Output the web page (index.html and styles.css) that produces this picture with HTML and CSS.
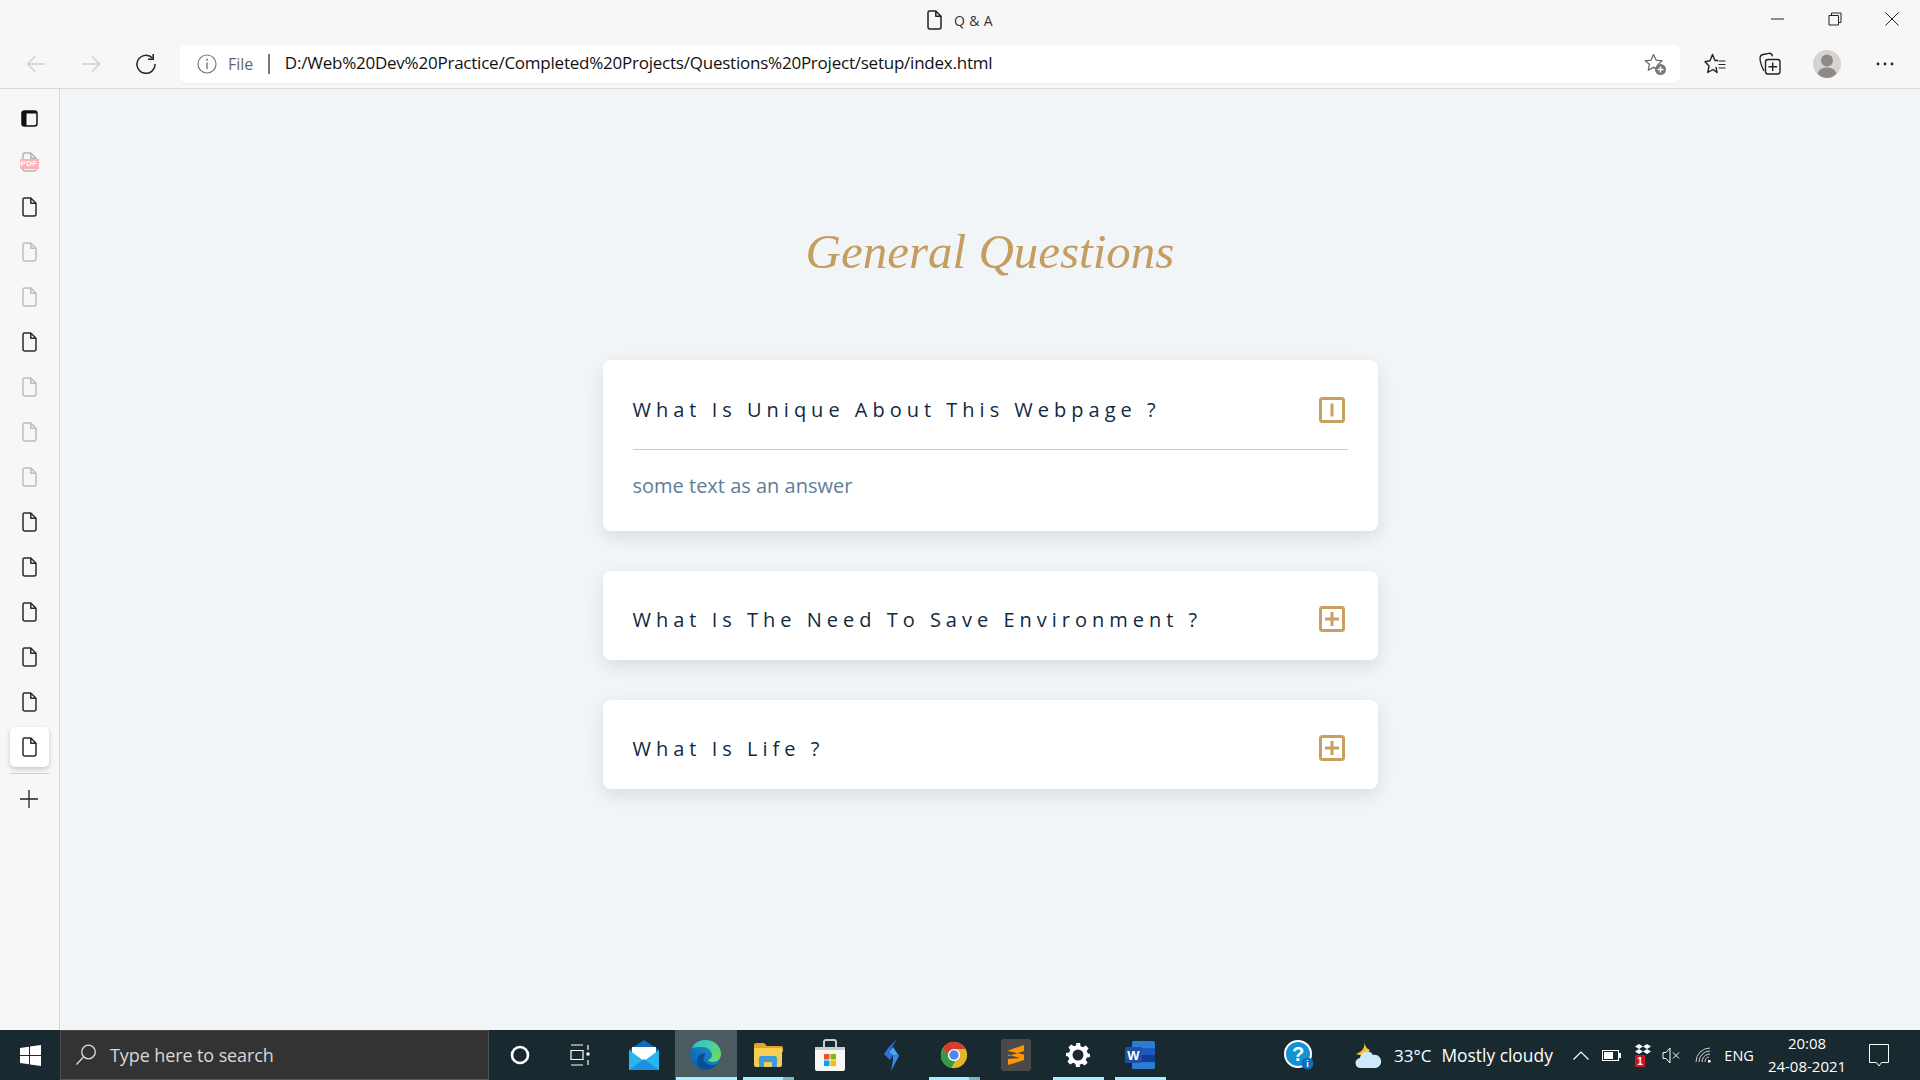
FILE: index.html
```html
<!DOCTYPE html>
<html lang="en">
<head>
<meta charset="utf-8">
<title>Q &amp; A</title>
<link rel="stylesheet" href="styles.css">
</head>
<body>
<svg class="defs" width="0" height="0" aria-hidden="true">
  <symbol id="doc" viewBox="0 0 15 20">
    <path d="M2.5 1h6.3L14 6.2V17a2 2 0 0 1-2 2H3a2 2 0 0 1-2-2V2.5A1.5 1.5 0 0 1 2.5 1zM8.8 1v5.2H14" fill="none" stroke="currentColor" stroke-width="1.5" stroke-linejoin="round"/>
  </symbol>
</svg>
<header class="browser">
  <div class="titlebar">
    <div class="tab-title">
      <svg class="title-doc"><use href="#doc"/></svg>
      <span>Q &amp; A</span>
    </div>
    <div class="window-controls">
      <span class="win-btn"><svg width="14" height="14" viewBox="0 0 14 14"><path d="M0 7h13" stroke="#222" stroke-width="1"/></svg></span>
      <span class="win-btn"><svg width="14" height="14" viewBox="0 0 14 14"><path d="M1 3.5h9.5V13H1zM3.5 3.5V1H13v9.5h-2.5" fill="none" stroke="#222" stroke-width="1"/></svg></span>
      <span class="win-btn"><svg width="14" height="14" viewBox="0 0 14 14"><path d="M.5.5l13 13M13.5.5l-13 13" stroke="#222" stroke-width="1"/></svg></span>
    </div>
  </div>
  <div class="toolbar">
    <span class="nav-btn"><svg width="20" height="18" viewBox="0 0 20 18"><path d="M19 9H1.5M9 1.5L1.5 9 9 16.5" fill="none" stroke="#cfcfcf" stroke-width="1.4"/></svg></span>
    <span class="nav-btn"><svg width="20" height="18" viewBox="0 0 20 18"><path d="M1 9h17.5M11 1.5L18.5 9 11 16.5" fill="none" stroke="#cfcfcf" stroke-width="1.4"/></svg></span>
    <span class="nav-btn"><svg width="22" height="22" viewBox="0 0 22 22"><path d="M17.6 5.2A9 9 0 1 0 20 11" fill="none" stroke="#222" stroke-width="1.5"/><path d="M18.2 1v5.2H13" fill="none" stroke="#222" stroke-width="1.5"/></svg></span>
    <div class="address">
      <svg class="info" width="20" height="20" viewBox="0 0 20 20"><circle cx="10" cy="10" r="9" fill="none" stroke="#777" stroke-width="1.2"/><path d="M10 8.5V15" stroke="#777" stroke-width="1.4"/><circle cx="10" cy="5.8" r="1" fill="#777"/></svg>
      <span class="file">File</span>
      <span class="addr-sep"></span>
      <span class="url">D:/Web%20Dev%20Practice/Completed%20Projects/Questions%20Project/setup/index.html</span>
      <svg class="addr-star" width="24" height="24" viewBox="0 0 24 24"><path d="M10.5 2.5l2.6 5.6 6 .7-4.400 4.100 1 5.300-5.200-2.800-5.200 2.800 1.100-6-4.300-3.400 6-.7z" fill="none" stroke="#666" stroke-width="1.200" stroke-linejoin="round"/><circle cx="17.500" cy="17.500" r="5.500" fill="#777"/><path d="M17.500 14.500v6M14.500 17.500h6" stroke="#fff" stroke-width="1.500"/></svg>
    </div>
    <div class="tools">
      <span class="tool"><svg width="22" height="22" viewBox="0 0 22 22"><path d="M14 7.500h-3L8.500 1.500 6 7.700l-5 1 4 4.300-1.200 6.500L9 16.500l4 3-1-5.500" fill="none" stroke="#222" stroke-width="1.400" stroke-linejoin="round"/><path d="M14.500 8h7M14.500 11.500h7M14.500 15h7" stroke="#222" stroke-width="1.200"/></svg></span>
      <span class="tool tool-collections"><svg width="22" height="24" viewBox="0 0 22 24"><path d="M5 19C3 15 1 10 1 6c0-2 1-3 3-3.500l6-1.200c2-.3 3 .5 3.500 3" fill="none" stroke="#222" stroke-width="1.300"/><rect x="6.500" y="7.500" width="14.500" height="14.500" rx="2.500" fill="none" stroke="#222" stroke-width="1.400"/><path d="M13.700 10.500v8.500M9.500 14.700H18" stroke="#222" stroke-width="1.400"/></svg></span>
      <span class="tool tool-avatar"><svg width="28" height="28" viewBox="0 0 28 28"><circle cx="14" cy="14" r="14" fill="#d6d4d0"/><circle cx="14" cy="10.500" r="6" fill="#8f8a85"/><path d="M4.500 23.500C6 19 10 17.500 14 17.500s8 1.500 9.500 6C21 26.500 17.500 28 14 28s-7-1.500-9.500-4.500z" fill="#8f8a85"/></svg></span>
      <span class="tool"><svg width="18" height="4" viewBox="0 0 18 4"><circle cx="2" cy="2" r="1.400" fill="#222"/><circle cx="9" cy="2" r="1.400" fill="#222"/><circle cx="16" cy="2" r="1.400" fill="#222"/></svg></span>
    </div>
  </div>
</header>

<div class="workspace">
  <aside class="sidebar">
    <span class="side-item side-first"><svg width="17" height="17" viewBox="0 0 17 17"><rect x="1" y="1" width="15" height="15" rx="2.500" fill="none" stroke="#111" stroke-width="1.500"/><path d="M1 2.500A1.500 1.500 0 0 1 2.500 1h13a.5.5 0 0 1 .5.5v2H5.500V16h-3A1.500 1.500 0 0 1 1 14.500z" fill="#111"/></svg></span>
    <span class="side-item pdf-item">
      <svg class="pdf-doc"><use href="#doc"/></svg>
      <span class="pdf-tag">PDF</span>
    </span>
    <span class="side-item"><svg class="doc"><use href="#doc"/></svg></span>
    <span class="side-item dim"><svg class="doc"><use href="#doc"/></svg></span>
    <span class="side-item dim"><svg class="doc"><use href="#doc"/></svg></span>
    <span class="side-item"><svg class="doc"><use href="#doc"/></svg></span>
    <span class="side-item dim"><svg class="doc"><use href="#doc"/></svg></span>
    <span class="side-item dim"><svg class="doc"><use href="#doc"/></svg></span>
    <span class="side-item dim"><svg class="doc"><use href="#doc"/></svg></span>
    <span class="side-item"><svg class="doc"><use href="#doc"/></svg></span>
    <span class="side-item"><svg class="doc"><use href="#doc"/></svg></span>
    <span class="side-item"><svg class="doc"><use href="#doc"/></svg></span>
    <span class="side-item"><svg class="doc"><use href="#doc"/></svg></span>
    <span class="side-item"><svg class="doc"><use href="#doc"/></svg></span>
    <span class="side-item active"><svg class="doc"><use href="#doc"/></svg></span>
    <span class="side-rule"></span>
    <span class="side-item plus"><svg width="18" height="18" viewBox="0 0 18 18"><path d="M9 0v18M0 9h18" stroke="#222" stroke-width="1.300"/></svg></span>
  </aside>

  <main class="page">
    <h1 class="heading">General Questions</h1>
    <section class="questions">
      <article class="card">
        <div class="card-head">
          <h2 class="q-title">What Is Unique About This Webpage ?</h2>
          <svg class="toggle" viewBox="0 0 26 26"><rect x="1.500" y="1.500" width="23" height="23" rx="2" fill="none" stroke="#c9a05f" stroke-width="3"/><path d="M13 6.500v13" stroke="#c9a05f" stroke-width="3"/></svg>
        </div>
        <div class="card-rule"></div>
        <p class="answer">some text as an answer</p>
      </article>
      <article class="card">
        <div class="card-head card-head-closed">
          <h2 class="q-title">What Is The Need To Save Environment ?</h2>
          <svg class="toggle" viewBox="0 0 26 26"><rect x="1.500" y="1.500" width="23" height="23" rx="2" fill="none" stroke="#c9a05f" stroke-width="3"/><path d="M13 6v14M6 13h14" stroke="#c9a05f" stroke-width="3"/></svg>
        </div>
      </article>
      <article class="card">
        <div class="card-head card-head-closed">
          <h2 class="q-title">What Is Life ?</h2>
          <svg class="toggle" viewBox="0 0 26 26"><rect x="1.500" y="1.500" width="23" height="23" rx="2" fill="none" stroke="#c9a05f" stroke-width="3"/><path d="M13 6v14M6 13h14" stroke="#c9a05f" stroke-width="3"/></svg>
        </div>
      </article>
    </section>
  </main>
</div>

<footer class="taskbar">
  <span class="start"><svg width="21" height="21" viewBox="0 0 21 21"><path d="M0 3l9-1.300V10H0zM10 1.500L21 0v10H10zM0 11h9v8.300L0 18zM10 11h11v10l-11-1.500z" fill="#fff"/></svg></span>
  <div class="search">
    <svg width="22" height="22" viewBox="0 0 22 22"><circle cx="13.500" cy="8" r="6.800" fill="none" stroke="#ddd" stroke-width="1.300"/><path d="M8.500 13L1.500 20.500" stroke="#ddd" stroke-width="1.300"/></svg>
    <span>Type here to search</span>
  </div>
  <div class="task-cells">
    <span class="cell"><svg width="20" height="20" viewBox="0 0 20 20"><circle cx="10" cy="10" r="8" fill="none" stroke="#fff" stroke-width="2.600"/></svg></span>
    <span class="cell"><svg class="taskview" width="21" height="22" viewBox="0 0 21 22"><path d="M1 1h12M1 21h12M1 6.500h12v9H1zM18 1v5M18 16v5" fill="none" stroke="#fff" stroke-width="1.200"/><rect x="16.500" y="8.500" width="3" height="3" fill="#fff"/></svg></span>
    <span class="cell"><svg width="32" height="32" viewBox="0 0 32 32"><path d="M1 11L16 1l15 10v20H1z" fill="#0f6cbd"/><path d="M4 8h24v13L16 25 4 21z" fill="#fff"/><path d="M1 11l15 11 15-11v20H1z" fill="#2bb5f0"/><path d="M1 31l15-11 15 11z" fill="#1d8fe0"/></svg></span>
    <span class="cell on"><svg width="32" height="32" viewBox="0 0 32 32"><defs><linearGradient id="edgeA" x1="0" y1="1" x2="1" y2="0"><stop offset="0" stop-color="#0c59a4"/><stop offset="1" stop-color="#1b9de2"/></linearGradient><linearGradient id="edgeB" x1="0" y1="0" x2="1" y2="1"><stop offset="0" stop-color="#33bfd8"/><stop offset="1" stop-color="#6ee05a"/></linearGradient></defs><circle cx="15" cy="16" r="15" fill="url(#edgeA)"/><path d="M2 9C5 3 10 1 16 1c8 0 15 6 15 14 0 5-4 8-8 8-3 0-5-1-5-2 3-1 4-3 4-5 0-4-4-8-9-8-5 0-9 0-11 1z" fill="url(#edgeB)"/><path d="M12 30c-5-2-6-8-4-12 2-3 6-5 8-3-3 2-3 6-1 8 2 3 7 4 12 2-3 4-9 7-15 5z" fill="#0a4f94"/></svg></span>
    <span class="cell"><svg width="30" height="26" viewBox="0 0 30 26"><path d="M1 3a2 2 0 0 1 2-2h8l3 3h14a2 2 0 0 1 2 2v4H1z" fill="#e0a526"/><rect x="1" y="6" width="28" height="19" rx="2" fill="#f6ce55"/><path d="M6 25v-9a2 2 0 0 1 2-2h14a2 2 0 0 1 2 2v9h-5v-5h-8v5z" fill="#3f9ad8"/></svg></span>
    <span class="cell"><svg width="30" height="32" viewBox="0 0 30 32"><path d="M9 8V3a2 2 0 0 1 2-2h8a2 2 0 0 1 2 2v5" fill="none" stroke="#ccc" stroke-width="2"/><path d="M0 8h30v22a2 2 0 0 1-2 2H2a2 2 0 0 1-2-2z" fill="#f7f7f7"/><path d="M0 8h30v3H0z" fill="#ccc"/><rect x="9" y="15" width="5.500" height="5.500" fill="#f25022"/><rect x="15.500" y="15" width="5.500" height="5.500" fill="#7fba00"/><rect x="9" y="21.500" width="5.500" height="5.500" fill="#00a4ef"/><rect x="15.500" y="21.500" width="5.500" height="5.500" fill="#ffb900"/></svg></span>
    <span class="cell"><svg width="16" height="32" viewBox="0 0 16 32"><path d="M13 0L5 8 0 15l6 6 3-5-4-3z" fill="#2f6fe0"/><path d="M5 13l4 3 6 1-6-9z" fill="#49a8f0"/><path d="M9 16l6 1-8 15 2-11z" fill="#3b86e8"/></svg></span>
    <span class="cell"><svg width="28" height="30" viewBox="0 0 32 32"><circle cx="16" cy="16" r="15" fill="#e3b72c"/><path d="M16 1a15 15 0 0 0-12.500 6.700L9.500 19 16 9h13A15 15 0 0 0 16 1z" fill="#d93c2f"/><path d="M3.500 7.700A15 15 0 0 0 13 30.700L18 22 10 20z" fill="#2f9b48"/><circle cx="16" cy="16" r="7" fill="#fff"/><circle cx="16" cy="16" r="5.400" fill="#4d87ee"/></svg></span>
    <span class="cell"><svg width="30" height="32" viewBox="0 0 30 32"><rect width="30" height="32" rx="3" fill="#4a4a4a"/><path d="M23 6v6L7 17v-5.500zM7 20v6l16-5v-5.500L7 12v3.500L19 19z" fill="#ff9800"/></svg></span>
    <span class="cell"><svg width="24" height="24" viewBox="0 0 24 24"><path d="M10 0h4l.6 3.200 2.400 1 2.700-1.800 2.900 2.900L20.800 8l1 2.400L24 11v3l-3.200.6-1 2.400 1.800 2.700-2.900 2.900-2.700-1.800-2.400 1L14 24h-4l-.6-3.200-2.400-1-2.700 1.800-2.900-2.900L3.200 16l-1-2.400L0 13v-3l3.200-.6 1-2.400L2.400 4.300l2.900-2.900L8 3.200l2.400-1z" fill="#fff"/><circle cx="12" cy="12" r="5.500" fill="#1a2a30"/></svg></span>
    <span class="cell"><svg width="30" height="30" viewBox="0 0 30 30"><rect x="7" y="1" width="23" height="28" rx="1.500" fill="#2b7cd3"/><path d="M7 8h23v7H7z" fill="#185abd"/><path d="M7 15h23v7H7z" fill="#103f91"/><rect x="0" y="7" width="17" height="16" rx="1.500" fill="#1e4fa8"/><text x="8.500" y="19.500" class="word-w">W</text></svg></span>
    <i class="bar bar-edge"></i>
    <i class="bar bar-files"></i><i class="bar bar-files-more"></i>
    <i class="bar bar-chrome"></i><i class="bar bar-chrome-more"></i>
    <i class="bar bar-gear"></i><i class="bar bar-word"></i>
  </div>
  <div class="tray">
    <svg class="tray-help" width="30" height="30" viewBox="0 0 30 30"><circle cx="14" cy="14" r="13" fill="#1193d8" stroke="#fff" stroke-width="2"/><text x="14" y="21" class="help-q">?</text><circle cx="23.500" cy="23.500" r="6" fill="#0b70b8"/><text x="23.500" y="27" class="help-i">i</text></svg>
    <svg class="tray-weather" width="28" height="28" viewBox="0 0 28 28"><path d="M9 1c1 4 0 9-8 12 5 2 11 1 14-4C12 8 10 5 9 1z" fill="#f6c12c"/><path d="M6 27a5 5 0 0 1-1-10 7 7 0 0 1 13-3 6.500 6.500 0 0 1 3 13z" fill="#cfe9fa"/></svg>
    <span class="temp">33°C</span>
    <span class="cond">Mostly cloudy</span>
    <svg class="tray-chev" width="16" height="9" viewBox="0 0 16 9"><path d="M.5 8.500L8 1l7.500 7.500" fill="none" stroke="#fff" stroke-width="1.200"/></svg>
    <svg class="tray-batt" width="19" height="11" viewBox="0 0 19 11"><rect x=".5" y=".5" width="16" height="10" fill="none" stroke="#fff"/><rect x="2" y="2" width="9" height="7" fill="#fff"/><rect x="17" y="3" width="2" height="5" fill="#fff"/></svg>
    <svg class="tray-box" width="19" height="23" viewBox="0 0 19 23"><path d="M4 0l4 2.500L4 5 0 2.500zM12 0l4 2.500L12 5 8 2.500zM4 5l4 2.500L4 10 0 7.500zM12 5l4 2.500-4 2.500-4-2.500z" fill="#fff"/><rect y="11" width="10" height="12" rx="1" fill="#d3122a"/><text x="5" y="21" class="box-n">1</text></svg>
    <svg class="tray-vol" width="19" height="17" viewBox="0 0 19 17"><path d="M1 5.500h3L8 1v15l-4-4.500H1z" fill="none" stroke="#fff"/><path d="M11 5.500l6 6M17 5.500l-6 6" stroke="#fff"/></svg>
    <svg class="tray-wifi" width="16" height="16" viewBox="0 0 16 16"><path d="M1 15A14 14 0 0 1 15 1M4 15A11 11 0 0 1 15 4M7 15a8 8 0 0 1 8-8M10 15a5 5 0 0 1 4-5" fill="none" stroke="#ccc"/><rect x="13" y="13" width="2.500" height="2.500" fill="#fff"/></svg>
    <span class="lang">ENG</span>
    <div class="clock"><span>20:08</span><span>24-08-2021</span></div>
    <svg class="tray-note" width="20" height="23" viewBox="0 0 20 23"><path d="M.5.500h19v18h-7L10 22l-2.500-3.500h-7z" fill="none" stroke="#fff"/></svg>
  </div>
</footer>
</body>
</html>
```
FILE: styles.css
```css
* { box-sizing: border-box; }
html, body { height: 100%; }
body {
  margin: 0;
  display: flex;
  flex-direction: column;
  height: 1080px;
  overflow: hidden;
  font-family: "Open Sans", "Liberation Sans", sans-serif;
  background: #f1f5f8;
}
.defs { position: absolute; }

/* Browser chrome */
.browser { height: 89px; background: #f7f7f7; border-bottom: 1px solid #d9d9d9; flex: none; }
.titlebar { height: 40px; position: relative; display: flex; justify-content: center; align-items: center; }
.tab-title { display: flex; align-items: center; gap: 12px; font-size: 14px; color: #333; letter-spacing: .4px; }
.title-doc { width: 15px; height: 20px; color: #222; }
.window-controls { position: absolute; right: 0; top: 0; display: flex; height: 38px; }
.win-btn { width: 57px; display: flex; align-items: center; justify-content: center; }
.toolbar { height: 48px; display: flex; align-items: center; padding-left: 8px; }
.nav-btn { width: 55px; display: flex; justify-content: center; align-items: center; }
.address {
  width: 1500px; height: 38px; margin-left: 7px; background: #fff; border-radius: 5px;
  display: flex; align-items: center; padding-left: 17px; box-shadow: 0 1px 2px rgba(0,0,0,.05);
}
.file { margin-left: 11px; font-size: 16px; color: #666; }
.addr-sep { width: 1.500px; height: 20px; background: #777; margin: 0 15px; }
.url { font-size: 17px; line-height: 22px; margin-bottom: 2px; color: #111; white-space: nowrap; letter-spacing: -.23px; }
.addr-star { margin-left: auto; margin-right: 13px; }
.tools { display: flex; margin-left: 7px; }
.tool { width: 56px; display: flex; align-items: center; justify-content: center; }
.tool-collections { width: 53px; }
.tool-avatar { width: 61px; }

/* Workspace */
.workspace { flex: 1; display: flex; min-height: 0; }
.sidebar {
  width: 60px; flex: none; background: #f7f7f7; border-right: 1px solid #d9d9d9;
  display: flex; flex-direction: column; align-items: center; padding-top: 9px; padding-right: 1px;
}
.side-item { width: 39px; height: 45px; flex: none; display: flex; align-items: center; justify-content: center; color: #2b2b2b; position: relative; }
.side-first { height: 41.500px; }
.doc { width: 15px; height: 20px; }
.dim { color: #bdbdbd; }
.pdf-doc { width: 15px; height: 20px; color: #b5b5b5; }
.pdf-tag {
  position: absolute; left: 0; right: 0; top: 19px; margin: 0 auto; width: 19px; height: 10px;
  background: #fcb3b7; color: #fff; font: bold 8px/10px "Liberation Sans", sans-serif; text-align: center; letter-spacing: .4px;
}
.active { height: 40px; margin-top: 2px; background: #fff; border-radius: 5px; box-shadow: 0 2px 5px rgba(0,0,0,.2); }
.side-rule { width: 39px; height: 1px; background: #d2d2d2; margin-top: 6px; flex: none; }
.plus { height: 50px; }

/* Page */
.page { flex: 1; display: flex; flex-direction: column; align-items: center; padding-top: 123px; }
.heading {
  margin: 0; height: 148px; font: italic 400 49px/80px "Liberation Serif", cursive;
  color: #c59d5f; white-space: nowrap;
}
.questions { width: 775px; display: flex; flex-direction: column; gap: 40px; }
.card { background: #fff; border-radius: 8px; box-shadow: 0 6px 18px rgba(0,0,0,.1); }
.card-head { height: 89px; padding: 37px 33px 26px 30px; display: flex; justify-content: space-between; align-items: center; }
.card-head-closed { padding-top: 35px; padding-bottom: 28px; }
.q-title { margin: 0 0 2px; font-size: 20px; font-weight: 400; letter-spacing: 5px; color: #102a42; white-space: nowrap; }
.card-head-closed .q-title { margin: 0; }
.toggle { width: 26px; height: 26px; flex: none; }
.card-rule { height: 1px; margin: 0 30px; background: #c9c9c9; }
.answer { margin: 0; padding: 21px 30px 30px; font-size: 20px; line-height: 30px; color: #617d98; }

/* Taskbar */
.taskbar { height: 50px; flex: none; background: #18292f; display: flex; position: relative; }
.start { width: 60px; display: flex; align-items: center; justify-content: center; }
.search {
  width: 429px; background: #333; border: 1px solid #4d4d4d; border-bottom-color: #555;
  display: flex; align-items: center; gap: 13px; padding-left: 14px; color: #d8d8d8; font-size: 18px; letter-spacing: -.1px;
}
.task-cells { display: flex; position: relative; }
.cell { width: 62px; height: 50px; display: flex; align-items: center; justify-content: center; }
.taskview { margin-right: 4px; }
.on { background: #4c5b60; }
.word-w { font: bold 13px "Liberation Sans", sans-serif; fill: #fff; text-anchor: middle; }
.bar { position: absolute; bottom: 0; height: 3px; background: #a9f0ff; }
.bar-edge { left: 187px; width: 61px; }
.bar-files { left: 254px; width: 40px; }
.bar-files-more { left: 294px; width: 11px; background: #7fb3bd; }
.bar-chrome { left: 440px; width: 40px; }
.bar-chrome-more { left: 480px; width: 11px; background: #7fb3bd; }
.bar-gear { left: 564px; width: 51px; }
.bar-word { left: 626px; width: 51px; }

.tray { margin-left: auto; width: 636px; display: flex; align-items: center; color: #fff; position: relative; }
.tray-weather { margin-left: 41px; }
.temp { margin-left: 11px; font-size: 17px; }
.cond { margin-left: 10px; white-space: nowrap; font-size: 17.400px; }
.tray-chev { margin-left: 20.500px; }
.tray-batt { margin-left: 13px; }
.tray-box { margin-left: 13.500px; }
.tray-vol { margin-left: 8px; }
.tray-wifi { margin-left: 14px; }
.lang { margin-left: 13.500px; font-size: 14.500px; }
.clock { margin-left: 14px; display: flex; flex-direction: column; align-items: center; font-size: 15px; line-height: 23px; }
.tray-note { margin-left: 23px; }
.help-q { font: bold 20px "Liberation Sans", sans-serif; fill: #fff; text-anchor: middle; }
.help-i { font: bold 9px "Liberation Sans", sans-serif; fill: #fff; text-anchor: middle; }
.box-n { font: bold 10px "Liberation Sans", sans-serif; fill: #fff; text-anchor: middle; }
```
